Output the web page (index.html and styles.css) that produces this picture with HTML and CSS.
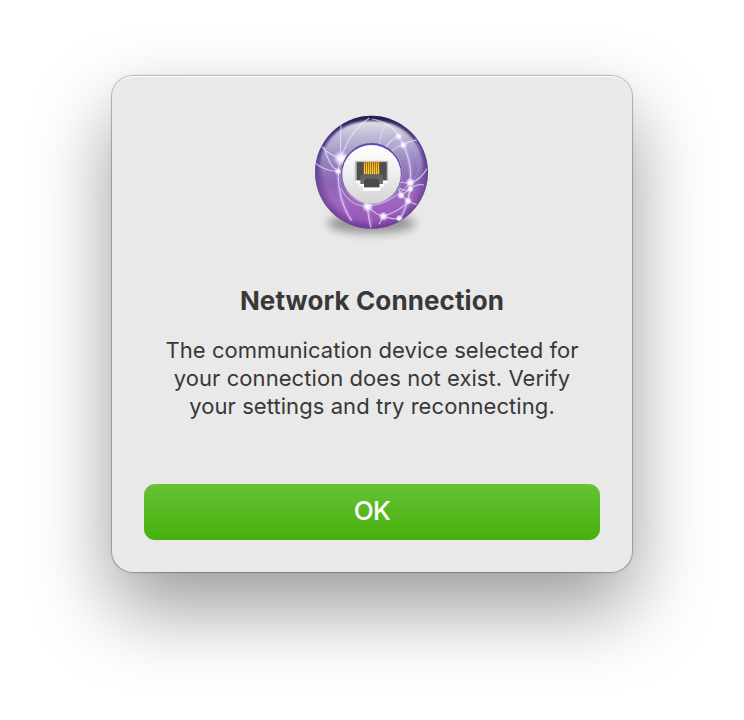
FILE: index.html
```html
<!DOCTYPE html>
<html lang="en">
<head>
<meta charset="utf-8">
<title>Network Connection</title>
<link rel="stylesheet" href="styles.css">
</head>
<body>
<main class="dialog" role="alertdialog" aria-labelledby="title" aria-describedby="message">
  <svg class="icon" viewBox="0 0 396 420" aria-hidden="true">
    <defs>
      <linearGradient id="orb" x1="0" y1="0" x2="0" y2="1">
        <stop offset="0" stop-color="#15122e"/>
        <stop offset=".08" stop-color="#34305c"/>
        <stop offset=".25" stop-color="#65559b"/>
        <stop offset=".5" stop-color="#7f60ae"/>
        <stop offset=".75" stop-color="#a067bf"/>
        <stop offset="1" stop-color="#9450b4"/>
      </linearGradient>
      <radialGradient id="rim" cx=".5" cy=".5" r=".5">
        <stop offset=".84" stop-color="#4b2880" stop-opacity="0"/>
        <stop offset="1" stop-color="#45237c" stop-opacity=".5"/>
      </radialGradient>
      <linearGradient id="gloss" x1="0" y1="0" x2="0" y2="1">
        <stop offset="0" stop-color="#f4f4fa" stop-opacity=".92"/>
        <stop offset=".4" stop-color="#dcd7ec" stop-opacity=".62"/>
        <stop offset="1" stop-color="#c0a8da" stop-opacity=".03"/>
      </linearGradient>
      <linearGradient id="disc" x1="0" y1="0" x2="0" y2="1">
        <stop offset="0" stop-color="#fff"/>
        <stop offset=".45" stop-color="#f0f0f0"/>
        <stop offset="1" stop-color="#d4d4d4"/>
      </linearGradient>
      <linearGradient id="port" x1="0" y1="0" x2="0" y2="1">
        <stop offset="0" stop-color="#4a4a4a"/>
        <stop offset="1" stop-color="#777"/>
      </linearGradient>
      <linearGradient id="pin" x1="0" y1="168" x2="0" y2="206" gradientUnits="userSpaceOnUse">
        <stop offset="0" stop-color="#f5a600"/>
        <stop offset="1" stop-color="#ffd95c"/>
      </linearGradient>
      <radialGradient id="node">
        <stop offset="0" stop-color="#fff"/>
        <stop offset=".4" stop-color="#f5efff" stop-opacity=".95"/>
        <stop offset="1" stop-color="#dccbff" stop-opacity="0"/>
      </radialGradient>
      <filter id="soft" x="-30%" y="-100%" width="160%" height="300%"><feGaussianBlur stdDeviation="15"/></filter>
      <filter id="glow"><feGaussianBlur stdDeviation="3"/></filter>
      <filter id="feather"><feGaussianBlur stdDeviation="3"/></filter>
      <clipPath id="clip"><circle cx="196.500" cy="199" r="168"/></clipPath>
    </defs>
    <ellipse cx="196" cy="352" rx="132" ry="30" fill="#000" opacity=".36" filter="url(#soft)"/>
    <circle cx="196.500" cy="199" r="169.500" fill="url(#orb)"/>
    <circle cx="196.500" cy="199" r="169.500" fill="url(#rim)"/>
    <g clip-path="url(#clip)">
      <path d="M44 158C61 84 123 44 197 44s134 40 152 114c9 45-12 76-44 80H91c-34-4-57-35-47-80Z" fill="url(#gloss)" filter="url(#feather)"/>
      <g fill="none" stroke="#eee8fc" stroke-width="3.600" opacity=".7">
        <path d="M190 36C151 62 121 105 105 157C90 200 94 282 137 344"/>
        <path d="M107 36C103 75 103 118 105 157"/>
        <path d="M43 116C57 138 79 150 105 157M55 124C62 154 72 181 96 196M28 172C48 188 74 196 96 196"/>
        <path d="M105 157L120 148M96 196L112 198"/>
        <path d="M198 39C238 47 265 68 278 91L292 117C309 153 317 193 313 230C311 275 297 322 279 341"/>
        <path d="M232 49C255 60 269 72 278 91M238 126C247 110 261 97 278 91M292 117C306 107 319 102 332 103M292 117C278 119 263 128 254 139"/>
        <path d="M222 119C220 91 229 71 244 57" opacity=".65"/>
        <path d="M283 228C294 231 305 233 313 230C335 225 351 209 363 188"/>
        <path d="M280 247C291 254 305 254 313 249C327 238 342 234 354 237M285 268L313 249L306 285L285 268L278 249"/>
        <path d="M105 245C119 280 148 302 184 300C226 298 267 281 313 230" opacity=".7"/>
        <path d="M185 301C202 318 216 328 232 331C270 318 295 302 306 285M232 331C253 338 269 340 279 337M185 301C184 322 190 344 195 365M232 331L219 355M306 285L332 296"/>
      </g>
      <path d="M302 119C350 147 349 193 316 230M330 69C324 93 331 116 350 136" fill="none" stroke="#92a8f0" stroke-width="3" opacity=".45"/>
      <path d="M105 157C90 200 94 282 137 344M278 91C326 158 326 267 279 341M185 301L195 360" fill="none" stroke="#e4d2ff" stroke-width="8" opacity=".35" filter="url(#glow)"/>
      <g fill="url(#node)">
        <circle cx="105" cy="157" r="25"/>
        <circle cx="96" cy="196" r="12"/>
        <circle cx="278" cy="91" r="13"/>
        <circle cx="292" cy="117" r="13"/>
        <circle cx="313" cy="230" r="16"/>
        <circle cx="313" cy="249" r="12"/>
        <circle cx="285" cy="268" r="13"/>
        <circle cx="306" cy="285" r="13"/>
        <circle cx="185" cy="301" r="19"/>
        <circle cx="232" cy="331" r="15"/>
        <circle cx="280" cy="337" r="12"/>
      </g>
    </g>
    <circle cx="197" cy="204" r="93" fill="#ece5f3" opacity=".3"/>
    <circle cx="196.500" cy="202" r="91" fill="#6048ac"/>
    <circle cx="196.500" cy="205" r="88" fill="url(#disc)"/>
    <path d="M148 166H245V230H234V242H223V254H171V242H160V230H148Z" fill="#fff"/>
    <path d="M148 226V166H245V226" fill="none" stroke="#b5b5b5" stroke-width="3"/>
    <path d="M152 169H242V223H231V234H220V244H174V234H163V223H152Z" fill="url(#port)"/>
    <path d="M152 169H173V206H163V223H152ZM221 169H242V223H231V206H221Z" fill="#4f4f4f"/>
    <path d="M174 244V223L180 217H214L220 223V244Z" fill="#4a4a4a"/>
    <path d="M174 223L180 217H214L220 223" fill="none" stroke="#666" stroke-width="2"/>
    <path d="M172 168H221V205H172Z" fill="#5a4520"/>
    <path d="M175.500 168V205M181.500 168V205M187.500 168V205M193.500 168V205M199.500 168V205M205.500 168V205M211.500 168V205M217.500 168V205" fill="none" stroke="url(#pin)" stroke-width="4.300"/>
  </svg>
  <h1 class="title" id="title">Network Connection</h1>
  <p class="message" id="message">The communication device selected for<br>your connection does not exist. Verify<br>your settings and try reconnecting.</p>
  <button class="confirm" type="button">OK</button>
</main>
</body>
</html>
```

FILE: styles.css
```css
* {
  box-sizing: border-box;
}

body {
  margin: 0;
  height: 720px;
  padding-top: 76px;
  overflow: hidden;
  background: #fff;
  color: #383838;
  font-family: Inter, "Liberation Sans", sans-serif;
}

.dialog {
  display: flex;
  flex-direction: column;
  align-items: center;
  width: 520px;
  height: 496px;
  margin: 0 auto;
  padding: 30px 32px 32px;
  border-radius: 21px;
  background: #e9e9e9;
  box-shadow:
    inset 0 1px 0 #fff,
    0 0 0 1px rgba(0, 0, 0, .18),
    0 0 3px rgba(0, 0, 0, .22),
    0 36px 80px rgba(0, 0, 0, .4);
}

.icon {
  flex: none;
  width: 132px;
  height: 140px;
}

.title {
  margin: 39px 0 0;
  font-size: 26px;
  font-weight: 700;
  line-height: 32px;
  letter-spacing: .1px;
  white-space: nowrap;
}

.message {
  margin: 19px 0 0;
  font-size: 22px;
  line-height: 28px;
  letter-spacing: .07px;
  text-align: center;
  white-space: nowrap;
}

.confirm {
  width: 100%;
  height: 56px;
  margin: auto 0 0;
  padding: 0 0 2px;
  border: 0;
  border-radius: 11px;
  background: linear-gradient(#67c235, #46b00d);
  color: #fff;
  font: 500 26px/54px Inter, "Liberation Sans", sans-serif;
  letter-spacing: -.6px;
}
```
